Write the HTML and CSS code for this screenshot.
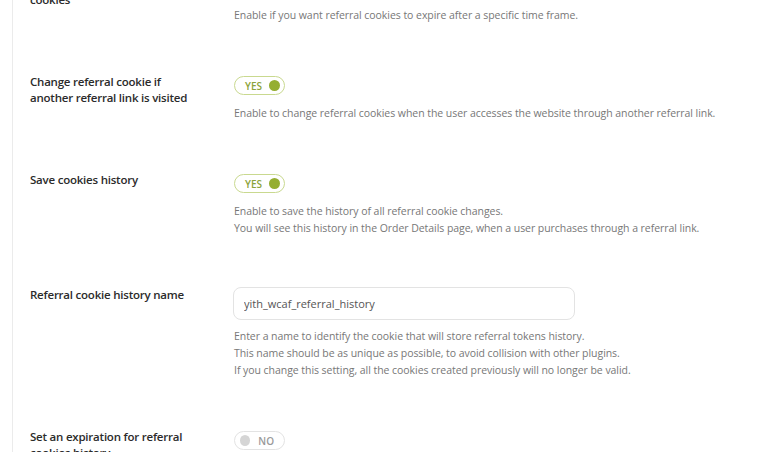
FILE: index.html
```html
<!DOCTYPE html>
<html>
<head>
<meta charset="utf-8">
<link rel="stylesheet" href="styles.css">
</head>
<body>
<div class="panel">
  <div class="row">
    <div class="label">Set an expiration for referral cookies</div>
    <div class="field">
      <div class="toggle on"><span class="txt">YES</span><span class="knob"></span></div>
      <div class="desc">Enable if you want referral cookies to expire after a specific time frame.</div>
    </div>
  </div>
  <div class="row">
    <div class="label">Change referral cookie if another referral link is visited</div>
    <div class="field">
      <div class="toggle on"><span class="txt">YES</span><span class="knob"></span></div>
      <div class="desc">Enable to change referral cookies when the user accesses the website through another referral link.</div>
    </div>
  </div>
  <div class="row">
    <div class="label">Save cookies history</div>
    <div class="field">
      <div class="toggle on"><span class="txt">YES</span><span class="knob"></span></div>
      <div class="desc">Enable to save the history of all referral cookie changes.<br>You will see this history in the Order Details page, when a user purchases through a referral link.</div>
    </div>
  </div>
  <div class="row">
    <div class="label">Referral cookie history name</div>
    <div class="field">
      <input class="text" type="text" value="yith_wcaf_referral_history">
      <div class="desc desc-input">Enter a name to identify the cookie that will store referral tokens history.<br>This name should be as unique as possible, to avoid collision with other plugins.<br>If you change this setting, all the cookies created previously will no longer be valid.</div>
    </div>
  </div>
  <div class="row">
    <div class="label">Set an expiration for referral cookies history</div>
    <div class="field">
      <div class="toggle off"><span class="knob"></span><span class="txt">NO</span></div>
    </div>
  </div>
</div>
</body>
</html>
```
FILE: styles.css
```css
html, body {
  margin: 0;
  padding: 0;
  background: #ffffff;
  overflow: hidden;
}
body {
  font-family: "Open Sans", "Noto Sans", sans-serif;
  color: #333;
}
.panel {
  margin-left: 12px;
  margin-top: -24px;
  border-left: 1px solid #ebebeb;
  padding-left: 17px;
  display: flex;
  flex-direction: column;
  gap: 50px;
  min-height: 520px;
}
.row {
  display: flex;
  align-items: flex-start;
}
.label {
  flex: 0 0 165px;
  margin-right: 39px;
  font-size: 11.5px;
  font-weight: 600;
  line-height: 16px;
  color: #2b2b2b;
  letter-spacing: -0.22px;
}
.field {
  display: flex;
  flex-direction: column;
  align-items: flex-start;
}
.toggle {
  margin-top: 2px;
  box-sizing: border-box;
  width: 51px;
  height: 19px;
  border-radius: 10px;
  border: 1px solid #c9d98f;
  display: flex;
  align-items: center;
  padding: 0 4px 0 10px;
  gap: 7px;
}
.toggle .txt {
  font-size: 10px;
  font-weight: 600;
  color: #8ca33a;
  line-height: 1;
}
.toggle .knob {
  width: 11px;
  height: 11px;
  border-radius: 50%;
  background: #95ae31;
}
.toggle.off {
  border-color: #e3e3e3;
  padding: 0 10px 0 5px;
  gap: 8px;
}
.toggle.off .knob {
  background: #d5d5d5;
}
.toggle.off .txt {
  color: #9a9a9a;
}
.desc {
  margin-top: 10px;
  font-size: 10.5px;
  line-height: 17px;
  color: #777;
  letter-spacing: -0.05px;
}
.desc-input {
  margin-top: 8px;
}
.text {
  box-sizing: border-box;
  width: 342px;
  height: 33px;
  margin: 0 0 0 -1px;
  border: 1px solid #e3e3e3;
  border-radius: 8px;
  padding: 0 10px;
  font-family: "Open Sans", "Noto Sans", sans-serif;
  font-size: 11px;
  color: #555;
  outline: none;
}
```
